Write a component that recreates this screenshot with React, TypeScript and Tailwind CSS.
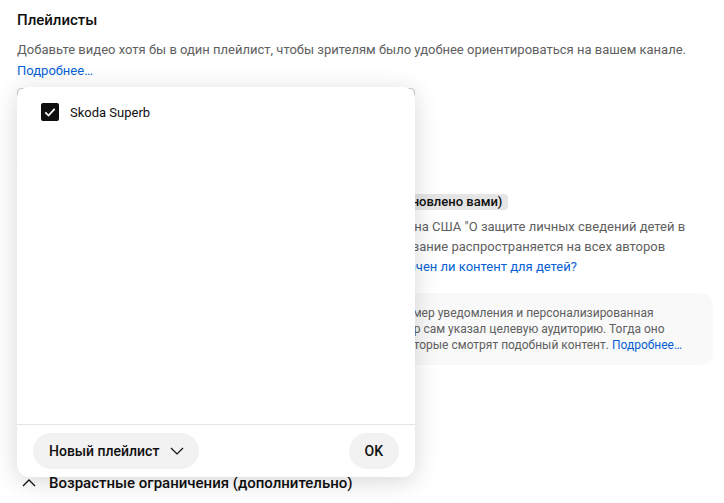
import React from "react";

function ChevronDown() {
  return (
    <svg width="16" height="16" viewBox="0 0 16 16" fill="none" stroke="#0f0f0f" strokeWidth="1.2">
      <polyline points="2,5 8,11 14,5" />
    </svg>
  );
}

function ChevronUp() {
  return (
    <svg width="24" height="24" viewBox="0 0 24 24" fill="none" stroke="#0f0f0f" strokeWidth="1.3">
      <polyline points="6,15 12,9 18,15" />
    </svg>
  );
}

export default function App() {
  return (
    <div className="relative w-[724px] h-[503px] overflow-hidden bg-white font-['Roboto',_'Noto_Sans',_sans-serif] text-[#0f0f0f]">
      <div className="pl-[17px] pr-[11px] pt-2">
        <h2 className="text-[15px] font-medium leading-6">Плейлисты</h2>
        <p className="mt-[7px] text-[13px] leading-[21px] text-[#606060]">
          Добавьте видео хотя бы в один плейлист, чтобы зрителям было удобнее ориентироваться на вашем канале.
          <br />
          <a className="text-[#065fd4]">Подробнее…</a>
        </p>
        <div className="mt-[7px] h-12 w-[398px] rounded border border-[#ccc] px-3 flex items-center text-[15px]">
          Выберите
        </div>
        <h2 className="mt-3 text-[15px] font-medium leading-6">Аудитория</h2>
        <div className="mt-5 h-5 flex items-center text-[13px]">
          <span className="inline-block h-4 leading-4 px-1.5 rounded bg-[#e5e5e5] font-medium whitespace-nowrap">
            Выбор аудитории: это видео не предназначено для детей (установлено вами)
          </span>
        </div>
        <div className="mt-[5px] text-[13px] leading-5 text-[#606060]">
          <div className="whitespace-nowrap">Где бы вы ни были, вы обязаны соблюдать все требования Закона США "О защите личных сведений детей в</div>
          <div className="whitespace-nowrap">Интернете" (COPPA) и/или иные применимые законы. Это требование распространяется на всех авторов</div>
          <div className="whitespace-nowrap">независимо от их местонахождения. <a className="text-[#065fd4]">Как определить, предназначен ли контент для детей?</a></div>
        </div>
        <div className="mt-4 w-[696px] rounded-xl bg-[#f9f9f9] px-4 py-3 text-xs leading-4 text-[#606060]">
          <div className="whitespace-nowrap">В видео для детей будут недоступны некоторые из функций, например уведомления и персонализированная</div>
          <div className="whitespace-nowrap">реклама. Видео может быть отмечено как детское, даже если автор сам указал целевую аудиторию. Тогда оно</div>
          <div className="whitespace-nowrap">будет чаще появляться в рекомендациях детям и тем зрителям, которые смотрят подобный контент. <a className="text-[#065fd4]">Подробнее…</a></div>
        </div>
        <div className="mt-3 flex flex-col text-[13px]">
          <div className="h-10 flex items-center gap-3">
            <span className="w-5 h-5 rounded-full border-2 border-[#606060]" />
            Да, это видео для детей
          </div>
          <div className="h-10 flex items-center gap-3">
            <span className="w-5 h-5 rounded-full border-2 border-[#606060]" />
            Нет, это видео не для детей
          </div>
        </div>
        <div className="mt-[14px] h-6 flex items-center gap-2">
          <ChevronUp />
          <span className="text-[15px] font-medium">Возрастные ограничения (дополнительно)</span>
        </div>
      </div>

      <div className="absolute left-[17px] top-[87px] w-[398px] h-[390px] rounded-xl bg-white shadow-[0_4px_24px_rgba(0,0,0,0.16)] flex flex-col">
        <div className="flex-1 pt-4 px-6">
          <div className="flex items-center gap-[11px] h-[18px]">
            <span className="w-[18px] h-[18px] rounded-[2px] bg-[#0f0f0f] flex items-center justify-center">
              <svg width="14" height="14" viewBox="0 0 24 24" fill="none" stroke="white" strokeWidth="3">
                <polyline points="4,12.5 9.5,18 20,6.5" />
              </svg>
            </span>
            <span className="text-[13px] leading-5 pt-0.5">Skoda Superb</span>
          </div>
        </div>
        <div className="border-t border-[#e5e5e5] h-[53px] px-4 flex items-center justify-between">
          <button className="h-9 rounded-full bg-[#f2f2f2] pl-4 pr-3.5 flex items-center gap-2.5 text-sm font-medium">
            Новый плейлист
            <ChevronDown />
          </button>
          <button className="h-9 rounded-full bg-[#f2f2f2] px-4 text-sm font-medium">OK</button>
        </div>
      </div>
    </div>
  );
}
